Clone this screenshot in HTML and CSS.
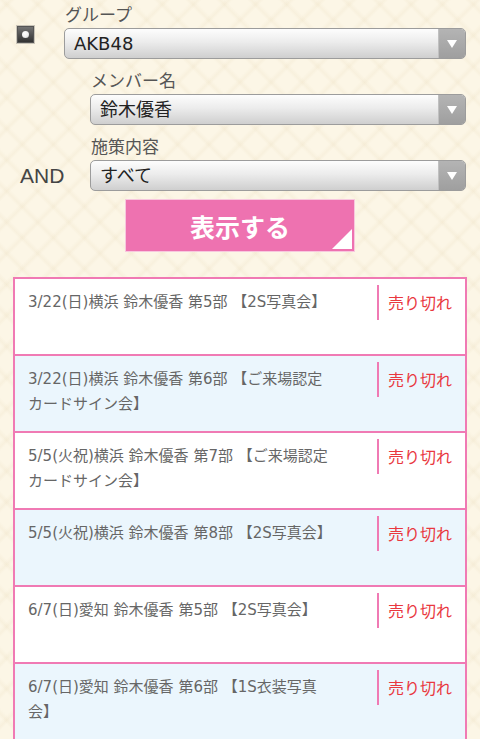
FILE: index.html
```html
<!DOCTYPE html>
<html lang="ja">
<head>
<meta charset="utf-8">
<title>検索</title>
<link rel="stylesheet" href="styles.css">
</head>
<body>
<div class="page">
  <form class="search">
    <div class="row row-group">
      <span class="check"><span class="dot"></span></span>
      <div class="field field-group">
        <div class="label">グループ</div>
        <div class="select"><span class="value">AKB48</span><span class="arrow"></span></div>
      </div>
    </div>
    <div class="row row-member">
      <div class="field">
        <div class="label">メンバー名</div>
        <div class="select"><span class="value">鈴木優香</span><span class="arrow"></span></div>
      </div>
    </div>
    <div class="row row-content">
      <span class="and">AND</span>
      <div class="field">
        <div class="label">施策内容</div>
        <div class="select"><span class="value">すべて</span><span class="arrow"></span></div>
      </div>
    </div>
    <div class="submit-wrap">
      <button type="button" class="submit">表示する</button>
    </div>
  </form>

  <ul class="list">
    <li class="item">
      <div class="title">3/22(日)横浜 鈴木優香 第5部 【2S写真会】</div>
      <div class="status">売り切れ</div>
    </li>
    <li class="item alt">
      <div class="title">3/22(日)横浜 鈴木優香 第6部 【ご来場認定カードサイン会】</div>
      <div class="status">売り切れ</div>
    </li>
    <li class="item">
      <div class="title">5/5(火祝)横浜 鈴木優香 第7部 【ご来場認定カードサイン会】</div>
      <div class="status">売り切れ</div>
    </li>
    <li class="item alt">
      <div class="title">5/5(火祝)横浜 鈴木優香 第8部 【2S写真会】</div>
      <div class="status">売り切れ</div>
    </li>
    <li class="item">
      <div class="title">6/7(日)愛知 鈴木優香 第5部 【2S写真会】</div>
      <div class="status">売り切れ</div>
    </li>
    <li class="item alt">
      <div class="title">6/7(日)愛知 鈴木優香 第6部 【1S衣装写真会】</div>
      <div class="status">売り切れ</div>
    </li>
  </ul>
</div>
</body>
</html>
```

FILE: styles.css
```css
html, body {
  margin: 0;
  padding: 0;
}
body {
  font-family: "DejaVu Sans", "Noto Sans CJK JP", sans-serif;
  background-color: #fcf6e6;
  background-image:
    repeating-linear-gradient(45deg, rgba(230, 215, 180, 0) 0px, rgba(230, 215, 180, 0) 15px, rgba(228, 212, 176, 0.16) 18px, rgba(230, 215, 180, 0) 22px),
    repeating-linear-gradient(-45deg, rgba(230, 215, 180, 0) 0px, rgba(230, 215, 180, 0) 15px, rgba(228, 212, 176, 0.16) 18px, rgba(230, 215, 180, 0) 22px);
  height: 739px;
  overflow: hidden;
}
.page {
  width: 480px;
}
.search {
  margin: 0;
  padding-top: 2px;
}
.row {
  display: flex;
  align-items: flex-end;
}
.row-group {
  padding-left: 16px;
}
.row-member {
  padding-left: 90px;
  margin-top: 9px;
}
.row-content {
  margin-top: 9px;
}
.check {
  width: 17px;
  height: 17px;
  margin-bottom: 15px;
  border: 1px solid #c9c4b8;
  background: linear-gradient(#777, #2e2e2e);
  display: flex;
  align-items: center;
  justify-content: center;
  box-shadow: inset 0 0 0 1px #555;
}
.dot {
  width: 7px;
  height: 7px;
  border-radius: 50%;
  background: radial-gradient(circle at 40% 35%, #fff 0, #f2f2f2 50%, #c8c8c8 100%);
}
.field {
  width: 376px;
}
.field-group {
  width: 402px;
  margin-left: 29px;
}
.label {
  font-family: "Noto Sans CJK JP", sans-serif;
  font-size: 17px;
  line-height: 23px;
  height: 23px;
  color: #555;
  margin-bottom: 3px;
  padding-left: 1px;
}
.select {
  display: flex;
  height: 29px;
  border: 1px solid #9c9c9c;
  border-radius: 5px;
  background: linear-gradient(#fdfdfd 0%, #ececec 45%, #cfcfcf 100%);
  overflow: hidden;
}
.value {
  flex: 1;
  font-size: 18px;
  line-height: 29px;
  color: #222;
  padding-left: 9px;
}
.arrow {
  width: 26px;
  background: linear-gradient(#b4b4b4, #9f9f9f);
  border-left: 1px solid #c0c0c0;
  display: flex;
  align-items: center;
  justify-content: center;
}
.arrow::after {
  content: "";
  width: 0;
  height: 0;
  border-left: 5px solid transparent;
  border-right: 5px solid transparent;
  border-top: 8px solid #fff;
}
.and {
  width: 90px;
  box-sizing: border-box;
  padding-left: 20px;
  font-family: "Liberation Sans", sans-serif;
  font-size: 21px;
  line-height: 31px;
  color: #444;
}
.submit-wrap {
  display: flex;
  justify-content: center;
  margin-top: 8px;
}
.submit {
  position: relative;
  width: 230px;
  height: 53px;
  border: 1px solid #f8c7de;
  background: #ee72b0;
  color: #fff;
  font-family: "Noto Sans CJK JP", sans-serif;
  font-size: 25px;
  font-weight: bold;
  padding: 0;
  cursor: pointer;
}
.submit::after {
  content: "";
  position: absolute;
  right: 2px;
  bottom: 2px;
  width: 0;
  height: 0;
  border-left: 20px solid transparent;
  border-bottom: 20px solid #fff;
}
.list {
  list-style: none;
  margin: 25px 0 0 13px;
  padding: 0;
  width: 450px;
  border: 2px solid #f07ab4;
  border-bottom: none;
}
.item {
  display: flex;
  align-items: flex-start;
  height: 75px;
  background: #fff;
  border-bottom: 2px solid #f07ab4;
}
.item.alt {
  background: #ebf6fd;
}
.title {
  width: 306px;
  margin-left: 13px;
  padding-top: 11px;
  font-size: 15px;
  line-height: 25px;
  color: #666;
}
.status {
  margin-left: auto;
  margin-top: 6px;
  width: 88px;
  height: 35px;
  box-sizing: border-box;
  border-left: 2px solid #f07ab4;
  padding-left: 9px;
  font-family: "Noto Sans CJK JP", sans-serif;
  font-size: 16px;
  line-height: 35px;
  color: #e9383f;
}
```
